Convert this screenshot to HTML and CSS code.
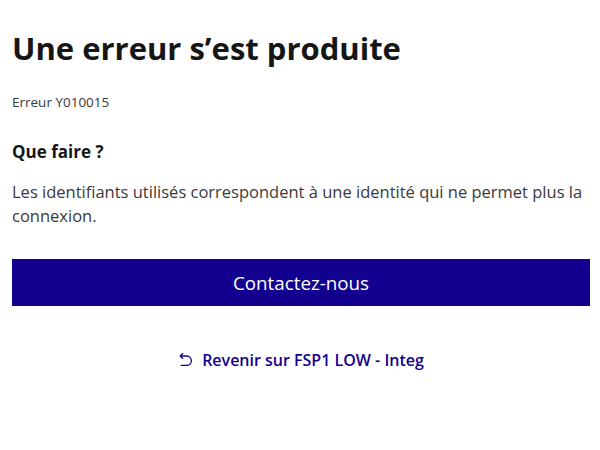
FILE: index.html
```html
<!DOCTYPE html>
<html lang="fr">
<head>
<meta charset="utf-8">
<link rel="stylesheet" href="styles.css">
</head>
<body>
<main class="page">
  <h1 class="title">Une erreur s’est produite</h1>
  <p class="code">Erreur Y010015</p>
  <h2 class="subtitle">Que faire ?</h2>
  <p class="text">Les identifiants utilisés correspondent à une identité qui ne permet plus la connexion.</p>
  <a class="btn" href="#">Contactez-nous</a>
  <div class="back-row">
    <a class="back" href="#">
      <svg class="icon" viewBox="0 0 24 24" width="16" height="16"><path fill="currentColor" d="M5.828 7l2.536 2.536L6.95 10.95 2 6l4.95-4.95 1.414 1.414L5.828 5H13a8 8 0 1 1 0 16H4v-2h9a6 6 0 1 0 0-12H5.828z"/></svg>
      <span>Revenir sur FSP1 LOW - Integ</span>
    </a>
  </div>
</main>
</body>
</html>
```
FILE: styles.css
```css
html, body { margin: 0; padding: 0; background: #fff; }
body {
  font-family: "Open Sans", "Noto Sans", sans-serif;
  color: #161616;
}
.page {
  padding: 26px 10px 0 12px;
  display: flex;
  flex-direction: column;
}
.title {
  margin: 0;
  font-size: 31px;
  line-height: 44px;
  font-weight: 700;
  color: #161616;
}
.code {
  margin: 22px 0 0 0;
  font-size: 13.5px;
  line-height: 20px;
  color: #3a3a3a;
}
.subtitle {
  margin: 28px 0 0 0;
  font-size: 17px;
  line-height: 24px;
  font-weight: 700;
}
.text {
  margin: 16px 0 0 0;
  font-size: 16.5px;
  line-height: 23.5px;
  color: #3a3a3a;
}
.btn {
  margin-top: 32px;
  height: 47px;
  background: #12008f;
  color: #fff;
  text-decoration: none;
  font-size: 18.8px;
  font-weight: 500;
  display: flex;
  align-items: center;
  justify-content: center;
}
.back-row {
  margin-top: 42px;
  display: flex;
  justify-content: center;
}
.back {
  display: flex;
  align-items: center;
  gap: 8px;
  color: #12008f;
  text-decoration: none;
  font-size: 16px;
  font-weight: 600;
  line-height: 24px;
}
.icon { flex: none; }
```
